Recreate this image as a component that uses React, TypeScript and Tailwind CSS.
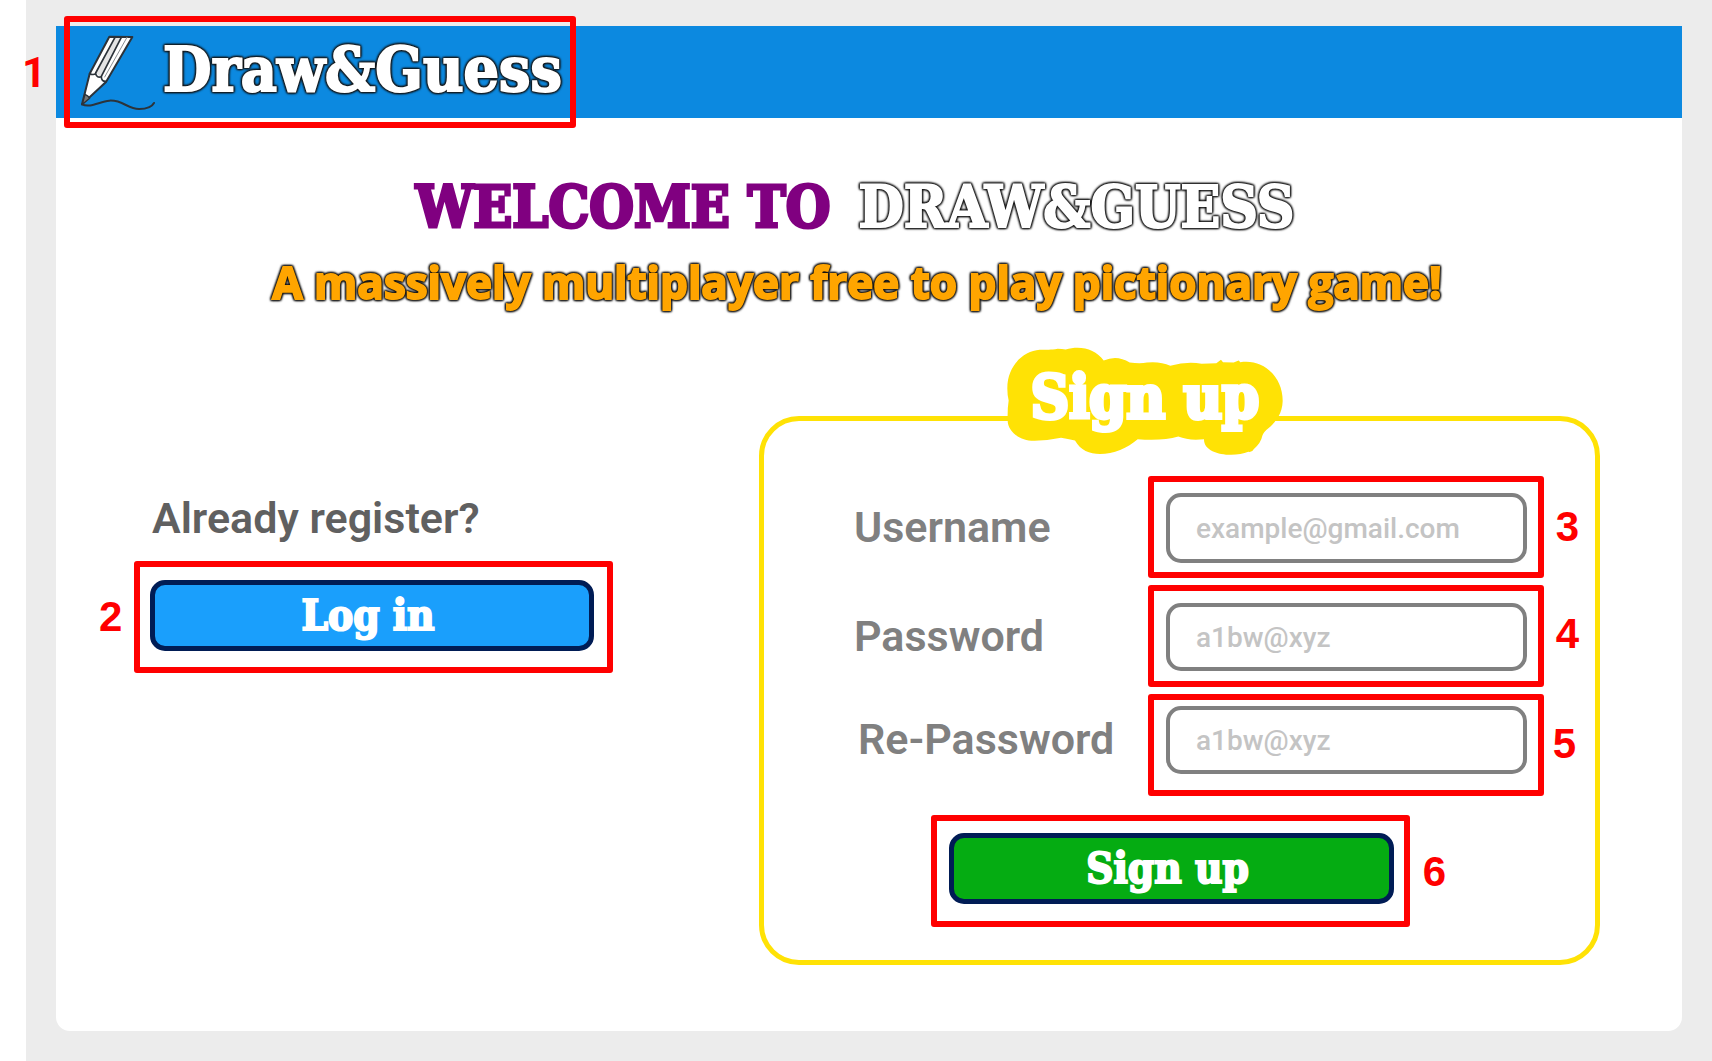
import React from "react";

const slab = "font-['DejaVu_Serif_Condensed','DejaVu_Serif',serif] font-bold";
const outline =
  "[filter:drop-shadow(0_0_1px_#111)_drop-shadow(0_0_1px_#111)_drop-shadow(0_0_0_#111)]";
const arial = "font-['Liberation_Sans',Arial,sans-serif]";

/** Red frame with a number beside it, laid over the control it points at. */
function Callout({ n, frame, label, font = arial }: { n: number; frame: string; label: string; font?: string }) {
  return (
    <span className={"pointer-events-none absolute rounded-[3px] border-6 border-[#ff0000] " + frame}>
      <span className={"absolute text-[42px] leading-[42px] font-bold text-[#ff0000] " + font + " " + label}>{n}</span>
    </span>
  );
}

function PencilLogo() {
  return (
    <svg viewBox="27 39 234 231" className="h-[77px] w-[78px] shrink-0" fill="none" aria-hidden="true">
      <path d="M118 47 187 48 108 183 101 185 46 244 39 246 45 221 59 158Z" fill="#fff" />
      <path d="M135 50 78 157 92 168 153 50Z" fill="#e4e4e4" />
      <g stroke="#2c333a" strokeWidth="6" strokeLinejoin="round" strokeLinecap="round">
        <path d="M118 47 187 48 108 183 36 250 59 158Z" />
        <path d="M135 49 77 156M154 49 94 166" strokeWidth="5" />
        <path d="M171 49 104 168" stroke="#8a8f94" strokeWidth="3" />
        <path d="M59 158 Q70 163 77 158 Q81 172 94 167 Q94 182 108 181" strokeWidth="5" />
        <path d="M45 220 Q55 224 59 232L37 250Z" fill="#777" strokeWidth="4" />
        <path d="M36 250C60 262 88 242 118 239C158 236 174 265 208 264C232 264 246 257 252 246" />
      </g>
    </svg>
  );
}

function SignUpBadge() {
  return (
    <div className="absolute -top-[74px] left-[243px] flex h-[109px] w-[276px] items-center justify-center">
      <svg viewBox="80 50 828 326" className="absolute inset-0 h-full w-full" aria-hidden="true">
        <path
          fill="#ffe205"
          d="M81 175C80 105 130 62 178 58C195 56 208 60 232 55Q245 55 256 57C300 44 345 55 370 90Q410 72 448 96Q480 100 500 96Q540 92 570 106Q620 92 664 100L708 98 722 88 728 95 760 96 775 90 780 95C850 84 908 140 907 212C906 250 885 275 866 292Q850 304 846 316Q842 338 820 356Q816 366 804 364C760 382 670 374 671 326Q625 331 594 318Q545 332 472 326C420 372 320 396 284 330Q262 326 242 322Q205 330 163 331C115 332 82 300 82 270Q81 235 85 210Q81 195 81 175Z"
        />
      </svg>
      <h2
        className={
          "relative pb-2 text-[59px] leading-[60px] whitespace-nowrap text-white [-webkit-text-stroke:4px_#fff] " + slab
        }
      >
        Sign up
      </h2>
    </div>
  );
}

function Field(props: {
  id: string;
  label: string;
  type: string;
  placeholder: string;
  n: number;
  size: string;
  frame: string;
  num: string;
  labelPad?: string;
}) {
  return (
    <div className="flex items-center justify-between">
      <label
        htmlFor={props.id}
        className={"pb-[2px] text-[43px] leading-[48px] font-semibold whitespace-nowrap text-[#808080] " + (props.labelPad ?? "")}
      >
        {props.label}
      </label>
      <div className="relative w-[361px] shrink-0">
        <input
          id={props.id}
          type={props.type}
          placeholder={props.placeholder}
          className={
            "block w-full rounded-[15px] border-4 border-[#808080] bg-white px-[26px] text-[28px] font-medium text-[#808080] outline-none placeholder:text-[#c4c4c4] " +
            props.size
          }
        />
        <Callout n={props.n} frame={props.frame} label={props.num} />
      </div>
    </div>
  );
}

const button =
  "block w-full h-[71px] rounded-[15px] border-[5px] border-[#001c55] pr-2 text-[42px] leading-[48px] text-white [-webkit-text-stroke:2px_#fff] cursor-pointer ";

export default function App() {
  return (
    <div className="min-h-screen bg-white pl-[26px] font-[Roboto,sans-serif]">
      <div className="flex min-h-screen flex-col bg-[#ececec] px-[30px] pt-[26px] pb-[30px]">
        <main className="flex-1 rounded-b-[14px] bg-white">
          <header className="flex h-[92px] items-center bg-[#0c89e0] pl-2">
            <a href="#" className="relative flex h-full w-[512px] items-center gap-1.5 pl-[15px]">
              <PencilLogo />
              <span
                className={"pb-1 text-[62px] leading-[72px] text-white [-webkit-text-stroke:2px_#fff] " + outline + " " + slab}
              >
                Draw&amp;Guess
              </span>
              <Callout n={1} frame="-inset-y-[10px] inset-x-0" label="top-[30px] -left-[48px]" font="font-[Roboto,sans-serif]" />
            </a>
          </header>

          <section className="pt-[51px] pr-6 text-center">
            <h1
              className={
                "flex justify-center gap-7 pr-1 text-[57px] leading-[76px] whitespace-nowrap text-[#800080] [-webkit-text-stroke:3px_#800080] " + slab
              }
            >
              <span>WELCOME TO</span>
              <span className={"text-[58px] text-white [-webkit-text-stroke:2px_#fff] " + outline}>DRAW&amp;GUESS</span>
            </h1>
            <p
              className={
                "font-['Open_Sans',sans-serif] text-[44px] leading-[74px] font-bold whitespace-nowrap text-[#ffa500] [-webkit-text-stroke:2px_#ffa500] " +
                outline
              }
            >
              A massively multiplayer free to play pictionary game!
            </p>
          </section>

          <div className="grid grid-cols-[444fr_841fr] gap-[165px] pt-[97px] pr-[82px] pl-[94px]">
            <section className="pt-[76px]">
              <p className="pl-[2px] text-[43px] leading-[52px] font-semibold whitespace-nowrap text-[#606060]">Already register?</p>
              <div className="relative mt-9">
                <button type="button" className={button + "bg-[#1a9ffc] " + slab}>
                  Log in
                </button>
                <Callout n={2} frame="-top-[19px] -bottom-[22px] -left-4 -right-[19px]" label="top-[29px] -left-[41px]" />
              </div>
            </section>

            <form
              className="relative rounded-[40px] border-[5px] border-[#ffe205] pt-[72px] pr-[68px] pb-14 pl-[90px]"
              onSubmit={(e) => e.preventDefault()}
            >
              <SignUpBadge />
              <Field id="username" label="Username" type="email" placeholder="example@gmail.com" n={3} size="h-[70px]" frame="-top-[17px] -bottom-[15px] -left-[18px] -right-[17px]" num="top-[24px] -right-[41px]" />
              <div className="mt-10">
                <Field id="password" label="Password" type="password" placeholder="a1bw@xyz" n={4} size="h-[68px]" frame="-top-[18px] -bottom-4 -left-[18px] -right-[17px]" num="top-[22px] -right-[41px]" />
              </div>
              <div className="mt-[35px]">
                <Field id="repassword" label="Re-Password" type="password" placeholder="a1bw@xyz" n={5} size="h-[68px]" frame="-top-3 -bottom-[22px] -left-[18px] -right-[17px]" num="top-[23px] -right-[38px]" labelPad="pl-1" />
              </div>
              <div className="relative mt-[59px] mr-[133px] ml-[95px]">
                <button type="submit" className={button + "bg-[#05ac12] " + slab}>
                  Sign up
                </button>
                <Callout n={6} frame="-top-[18px] -bottom-[23px] -left-[18px] -right-4" label="top-[30px] -right-[42px]" />
              </div>
            </form>
          </div>
        </main>
      </div>
    </div>
  );
}
